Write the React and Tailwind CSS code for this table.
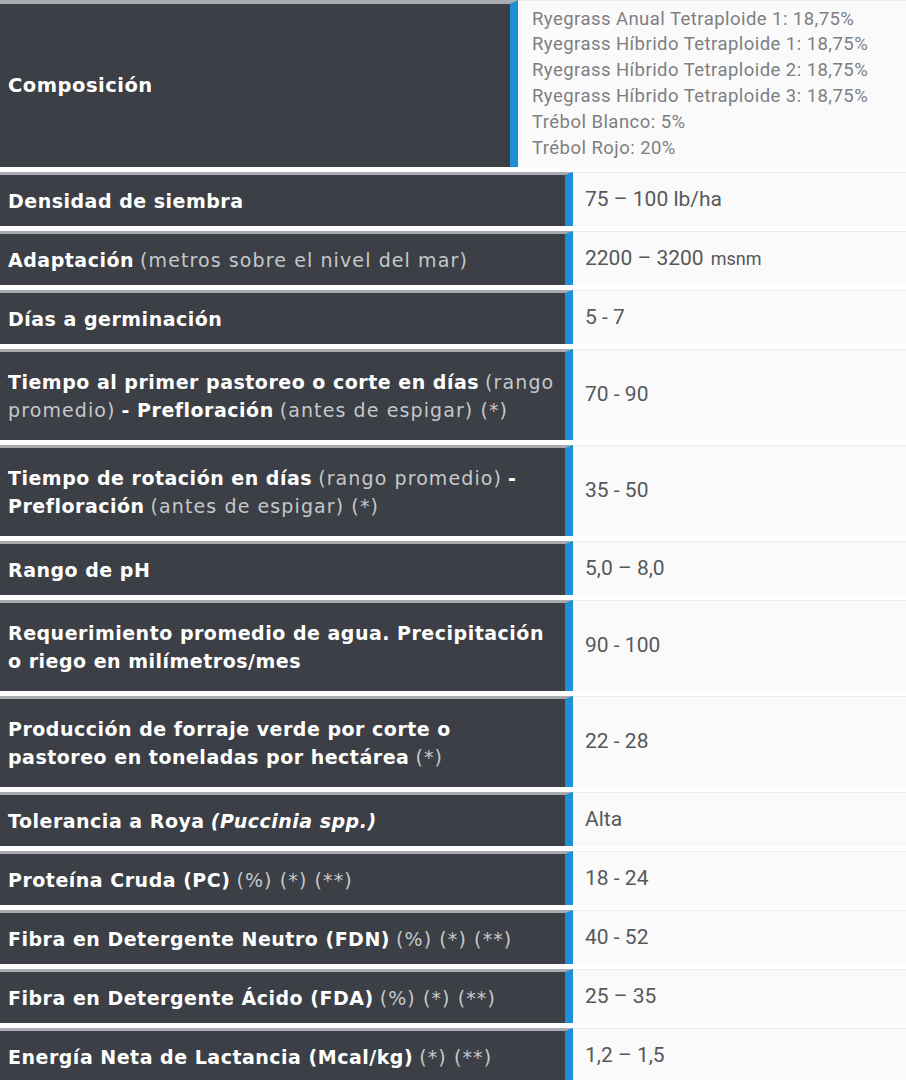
import React from "react";

const B = ({ children }) => <span className="font-bold text-white tracking-[0.5px]">{children}</span>;
const N = ({ children }) => <span className="font-normal text-[#c6c8cb] tracking-[1.1px]">{children}</span>;

const rows = [
  {
    h: "h-[54px]",
    left: <><B>Densidad de siembra</B></>,
    right: <>75 – 100 lb/ha</>,
  },
  {
    h: "h-[54px]",
    left: <><B>Adaptación</B> <N>(metros sobre el nivel del mar)</N></>,
    right: <>2200 – 3200<span className="ml-[7px] text-[18px]">msnm</span></>,
  },
  {
    h: "h-[54px]",
    left: <><B>Días a germinación</B></>,
    right: <>5 - 7</>,
  },
  {
    h: "h-[91px]",
    left: <><B>Tiempo al primer pastoreo o corte en días</B> <N>(rango</N><br /><N>promedio)</N> <B>- Prefloración</B> <N>(antes de espigar) (*)</N></>,
    right: <>70 - 90</>,
  },
  {
    h: "h-[91px]",
    left: <><B>Tiempo de rotación en días</B> <N>(rango promedio)</N> <B>-</B><br /><B>Prefloración</B> <N>(antes de espigar) (*)</N></>,
    right: <>35 - 50</>,
  },
  {
    h: "h-[54px]",
    left: <><B>Rango de pH</B></>,
    right: <>5,0 – 8,0</>,
  },
  {
    h: "h-[91px]",
    left: <><B>Requerimiento promedio de agua. Precipitación</B><br /><B>o riego en milímetros/mes</B></>,
    right: <>90 - 100</>,
  },
  {
    h: "h-[91px]",
    left: <><B>Producción de forraje verde por corte o</B><br /><B>pastoreo en toneladas por hectárea</B> <N>(*)</N></>,
    right: <>22 - 28</>,
  },
  {
    h: "h-[54px]",
    left: <><B>Tolerancia a Roya</B> <B><i>(Puccinia spp.)</i></B></>,
    right: <>Alta</>,
  },
  {
    h: "h-[54px]",
    left: <><B>Proteína Cruda (PC)</B> <N>(%) (*) (**)</N></>,
    right: <>18 - 24</>,
  },
  {
    h: "h-[54px]",
    left: <><B>Fibra en Detergente Neutro (FDN)</B> <N>(%) (*) (**)</N></>,
    right: <>40 - 52</>,
  },
  {
    h: "h-[54px]",
    left: <><B>Fibra en Detergente Ácido (FDA)</B> <N>(%) (*) (**)</N></>,
    right: <>25 – 35</>,
  },
  {
    h: "h-[54px]",
    left: <><B>Energía Neta de Lactancia (Mcal/kg)</B> <N>(*) (**)</N></>,
    right: <>1,2 – 1,5</>,
  },
];

const comp = [
  "Ryegrass Anual Tetraploide 1: 18,75%",
  "Ryegrass Híbrido Tetraploide 1: 18,75%",
  "Ryegrass Híbrido Tetraploide 2: 18,75%",
  "Ryegrass Híbrido Tetraploide 3: 18,75%",
  "Trébol Blanco: 5%",
  "Trébol Rojo: 20%",
];

export default function App() {
  return (
    <div className="w-[906px] h-[1080px] overflow-hidden bg-white flex flex-col gap-[5px]" style={{ fontFamily: "'DejaVu Sans', sans-serif" }}>
      <div className="flex h-[167px] shrink-0">
        <div className="w-[518px] shrink-0 bg-[#3c3f45] border-t-[4px] border-t-[#a8abaf] border-r-[8px] border-r-[#1d8fd6] flex items-center pl-[8px] text-[19.5px]">
          <B>Composición</B>
        </div>
        <div className="flex-1 bg-[#fafafa] border-t border-t-[#eeeeee] flex flex-col justify-center pl-[14px] text-[18.5px] leading-[25.8px] text-[#7d7f82] tracking-[0.45px]" style={{ fontFamily: "Roboto, sans-serif" }}>
          {comp.map((c) => (
            <div key={c} className="whitespace-nowrap">{c}</div>
          ))}
        </div>
      </div>
      {rows.map((r, i) => (
        <div key={i} className={`flex shrink-0 ${r.h}`}>
          <div className="w-[573px] shrink-0 bg-[#3c3f45] border-t-[3px] border-t-[#a8abaf] border-r-[8px] border-r-[#1d8fd6] flex items-center pl-[8px] text-[19px] leading-[28px] whitespace-nowrap">
            <div>{r.left}</div>
          </div>
          <div className="flex-1 bg-[#fafafa] border-t border-t-[#eeeeee] flex items-center pl-[12px] text-[21px] text-[#56585b] whitespace-nowrap" style={{ fontFamily: "Roboto, sans-serif" }}>
            {r.right}
          </div>
        </div>
      ))}
    </div>
  );
}
